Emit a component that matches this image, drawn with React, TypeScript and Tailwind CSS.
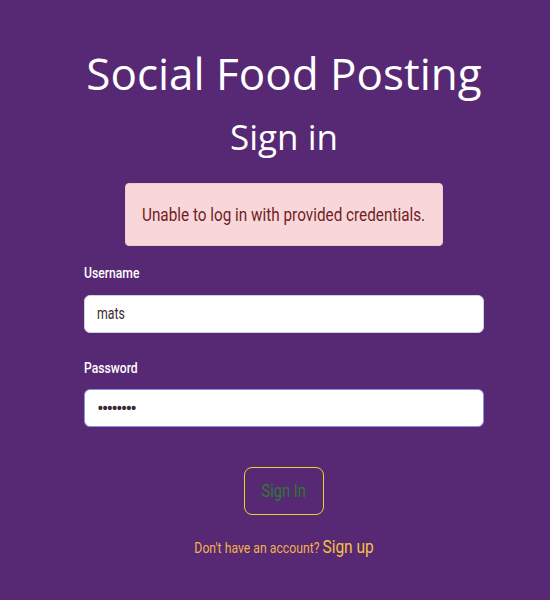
import React from "react";

const cond = { fontFamily: '"Roboto", "Liberation Sans", sans-serif' };
const head = { fontFamily: '"Open Sans", sans-serif', fontStretch: "normal" as const };

export default function App() {
  return (
    <div className="min-h-[600px] w-full bg-[#572873] flex flex-col items-center pl-[18px]" style={cond}>
      <h1 className="mt-[45px] text-[44px] leading-[56px] text-white font-normal" style={head}>
        Social Food Posting
      </h1>
      <h2 className="mt-[14px] text-[35px] leading-[44px] text-white font-normal" style={head}>
        Sign in
      </h2>
      <div className="mt-[24px] w-[318px] h-[63px] flex items-center justify-center rounded-[4px] bg-[#f8d7da] border border-[#f5c6cb] text-[#721c24] text-[18px] whitespace-nowrap">
        <span className="inline-block scale-x-[0.85] origin-center">Unable to log in with provided credentials.</span>
      </div>
      <div className="w-[400px] mt-[16px] flex flex-col">
        <label className="text-white text-[15px] leading-[22px] font-medium">
          <span className="inline-block scale-x-[0.81] origin-left">Username</span>
        </label>
        <div className="mt-[11px] h-[38px] w-full rounded-[6px] bg-white border border-[#ced4da] px-[12px] flex items-center text-[16px] text-[#3b2a33]">
          <span className="inline-block scale-x-[0.77] origin-left">mats</span>
        </div>
        <label className="mt-[24px] text-white text-[15px] leading-[22px] font-medium">
          <span className="inline-block scale-x-[0.81] origin-left">Password</span>
        </label>
        <div className="mt-[10px] h-[38px] w-full rounded-[6px] bg-white border border-[#8b8fe0] px-[12px] flex items-center text-[20px] text-[#3b2a33] tracking-[-2px]">
          ••••••••
        </div>
      </div>
      <button className="mt-[40px] w-[80px] h-[48px] rounded-[8px] border border-[#e8d52a] text-[#2d7a32] text-[19px] bg-transparent flex items-center justify-center" style={cond}>
        <span className="inline-block scale-x-[0.77] origin-center">Sign In</span>
      </button>
      <div className="mt-[18px] whitespace-nowrap">
        <span className="inline-block scale-x-[0.815] origin-center text-[15px] text-[#f0b24f]">
          Don't have an account? <span className="text-[19px] text-[#f5c242]">Sign up</span>
        </span>
      </div>
    </div>
  );
}
